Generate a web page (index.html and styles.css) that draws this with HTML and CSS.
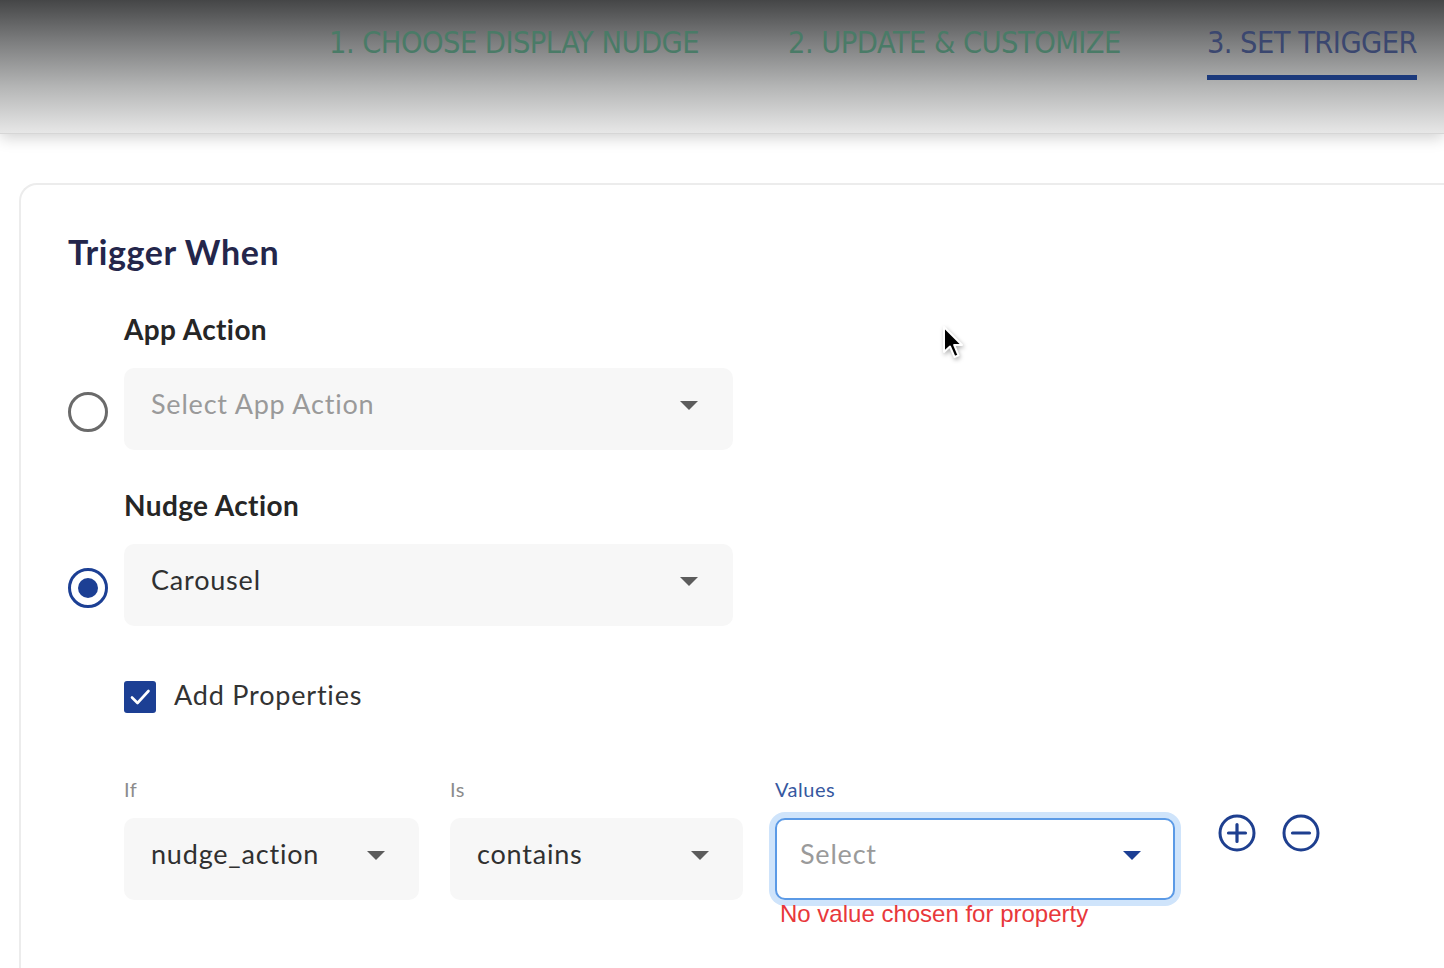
FILE: index.html
```html
<!DOCTYPE html>
<html>
<head>
<meta charset="utf-8">
<link rel="stylesheet" href="styles.css">
</head>
<body>
<header class="topbar">
  <nav class="tabs">
    <div class="tab done">1. CHOOSE DISPLAY NUDGE</div>
    <div class="tab done">2. UPDATE &amp; CUSTOMIZE</div>
    <div class="tab active">3. SET TRIGGER</div>
  </nav>
</header>
<main class="page">
  <section class="card">
    <h1 class="title">Trigger When</h1>

    <div class="group">
      <div class="group-label">App Action</div>
      <div class="radio"></div>
      <div class="select">
        <span class="placeholder">Select App Action</span>
        <span class="caret"></span>
      </div>
    </div>

    <div class="group">
      <div class="group-label">Nudge Action</div>
      <div class="radio checked"></div>
      <div class="select">
        <span class="value">Carousel</span>
        <span class="caret"></span>
      </div>
    </div>

    <div class="check-row">
      <div class="checkbox">
        <svg viewBox="0 0 32 32" width="32" height="32"><path d="M8 16.5 L13.5 22 L24.5 10" fill="none" stroke="#fff" stroke-width="2.6" stroke-linecap="round" stroke-linejoin="round"/></svg>
      </div>
      <span class="check-label">Add Properties</span>
    </div>

    <div class="props">
      <div class="field f-if">
        <div class="field-label">If</div>
        <div class="select small">
          <span class="value">nudge_action</span>
          <span class="caret"></span>
        </div>
      </div>
      <div class="field f-is">
        <div class="field-label">Is</div>
        <div class="select small">
          <span class="value">contains</span>
          <span class="caret"></span>
        </div>
      </div>
      <div class="field f-values">
        <div class="field-label focus">Values</div>
        <div class="select small focused">
          <span class="placeholder">Select</span>
          <span class="caret blue"></span>
        </div>
        <div class="error">No value chosen for property</div>
      </div>
      <div class="actions">
        <svg class="icon" viewBox="0 0 40 40" width="40" height="40"><circle cx="20" cy="20" r="17" fill="none" stroke="#1e3f8f" stroke-width="3"/><path d="M20 11.5 V28.5 M11.5 20 H28.5" stroke="#1e3f8f" stroke-width="3.2" stroke-linecap="round"/></svg>
        <svg class="icon" viewBox="0 0 40 40" width="40" height="40"><circle cx="20" cy="20" r="17" fill="none" stroke="#1e3f8f" stroke-width="3"/><path d="M11.5 20 H28.5" stroke="#1e3f8f" stroke-width="3.2" stroke-linecap="round"/></svg>
      </div>
    </div>
  </section>
</main>
<svg class="cursor" viewBox="0 0 24 36" width="24" height="36"><path d="M2 2 L2 27 L8 21.5 L12.5 32 L16.5 30.3 L12.2 20 L20 20 Z" fill="#000" stroke="#fff" stroke-width="2" stroke-linejoin="round"/></svg>
</body>
</html>
```

FILE: styles.css
```css
html, body {
  margin: 0;
  padding: 0;
  background: #ffffff;
  overflow: hidden;
  width: 1444px;
  height: 968px;
}
body {
  font-family: "Lato", "Noto Sans", sans-serif;
  position: relative;
}
.topbar {
  height: 133px;
  background: linear-gradient(to bottom, #454647 0%, #7a7b7c 30%, #b4b5b5 65%, #e7e7e7 100%);
  box-shadow: 0 4px 14px rgba(0,0,0,0.18);
  border-bottom: 1px solid #d6d6d6;
  position: relative;
  z-index: 1;
}
.tabs {
  display: flex;
  padding-left: 329px;
  height: 100%;
}
.tab {
  font-family: "DejaVu Sans Condensed", "DejaVu Sans", sans-serif;
  font-size: 30.5px;
  letter-spacing: -0.55px;
  padding-top: 25px;
  height: 50px;
  white-space: nowrap;
}
.tab.done {
  color: #4a7b67;
  margin-right: 89px;
}
.tab.done + .tab.done {
  margin-right: 86px;
}
.tab.active {
  color: #3b476f;
  border-bottom: 5px solid #1c3a7c;
}
.page {
  padding: 49px 0 0 19px;
}
.card {
  width: 1425px;
  height: 786px;
  border: 2px solid #ececec;
  border-right: none;
  border-bottom: none;
  border-radius: 18px 0 0 0;
  padding: 45px 0 0 47px;
  box-sizing: border-box;
}
.title {
  margin: 0;
  font-size: 34px;
  font-weight: 700;
  color: #24264b;
  line-height: 44px;
  letter-spacing: 0.6px;
}
.group {
  display: grid;
  grid-template-columns: 56px 609px;
  align-items: center;
}
.group-label {
  grid-column: 2;
  font-size: 28px;
  font-weight: 700;
  color: #262626;
  line-height: 36px;
  letter-spacing: 0.4px;
  margin-top: 37px;
  margin-bottom: 21px;
}
.radio {
  grid-column: 1;
  width: 34px;
  height: 34px;
  border: 3px solid #6a6a6a;
  border-radius: 50%;
  margin-top: 6px;
  box-sizing: content-box;
}
.radio.checked {
  border-color: #1c3f94;
  position: relative;
}
.radio.checked::after {
  content: "";
  position: absolute;
  left: 7px;
  top: 7px;
  width: 20px;
  height: 20px;
  border-radius: 50%;
  background: #1c3f94;
}
.select {
  grid-column: 2;
  height: 82px;
  background: #f7f7f7;
  border-radius: 10px;
  display: flex;
  align-items: center;
  justify-content: space-between;
  padding: 0 35px 0 27px;
  box-sizing: border-box;
  font-size: 27px;
  letter-spacing: 0.8px;
}
.placeholder {
  color: #9a9a9a;
  margin-top: -11px;
}
.value {
  color: #303030;
  margin-top: -11px;
}
.caret {
  width: 0;
  height: 0;
  margin-top: -7px;
  border-left: 9px solid transparent;
  border-right: 9px solid transparent;
  border-top: 9px solid #5c5c5c;
}
.caret.blue {
  border-top-color: #1c3f94;
}
.check-row {
  display: flex;
  align-items: center;
  height: 32px;
  margin-left: 56px;
  margin-top: 55px;
  gap: 18px;
}
.checkbox {
  width: 32px;
  height: 32px;
  background: #1c3f94;
  border-radius: 3px;
  display: flex;
}
.check-label {
  font-size: 27px;
  letter-spacing: 0.8px;
  line-height: 32px;
  color: #333;
  margin-top: -4px;
}
.props {
  display: flex;
  margin-left: 56px;
  margin-top: 64px;
  align-items: flex-start;
}
.field-label {
  font-size: 20px;
  letter-spacing: 0.5px;
  color: #8c8c8c;
  line-height: 24px;
  margin-bottom: 17px;
}
.field-label.focus {
  color: #3658a0;
}
.select.small {
  padding: 0 34px 0 27px;
}
.f-if { width: 295px; margin-right: 31px; }
.f-is { width: 293px; margin-right: 32px; }
.f-values { width: 400px; margin-right: 42px; }
.select.focused {
  background: #fff;
  border: 2px solid #5b9ae6;
  box-shadow: 0 0 0 6px #cfe4fb;
  padding: 0 32px 0 23px;
}
.error {
  font-family: "Liberation Sans", Arial, sans-serif;
  color: #e8383b;
  font-size: 24px;
  margin-top: 0;
  margin-left: 5px;
  line-height: 28px;
}
.actions {
  display: flex;
  gap: 24px;
  padding-top: 36px;
}
.cursor {
  position: absolute;
  left: 942px;
  top: 325px;
  filter: drop-shadow(1px 2px 2px rgba(0,0,0,0.3));
}
```
